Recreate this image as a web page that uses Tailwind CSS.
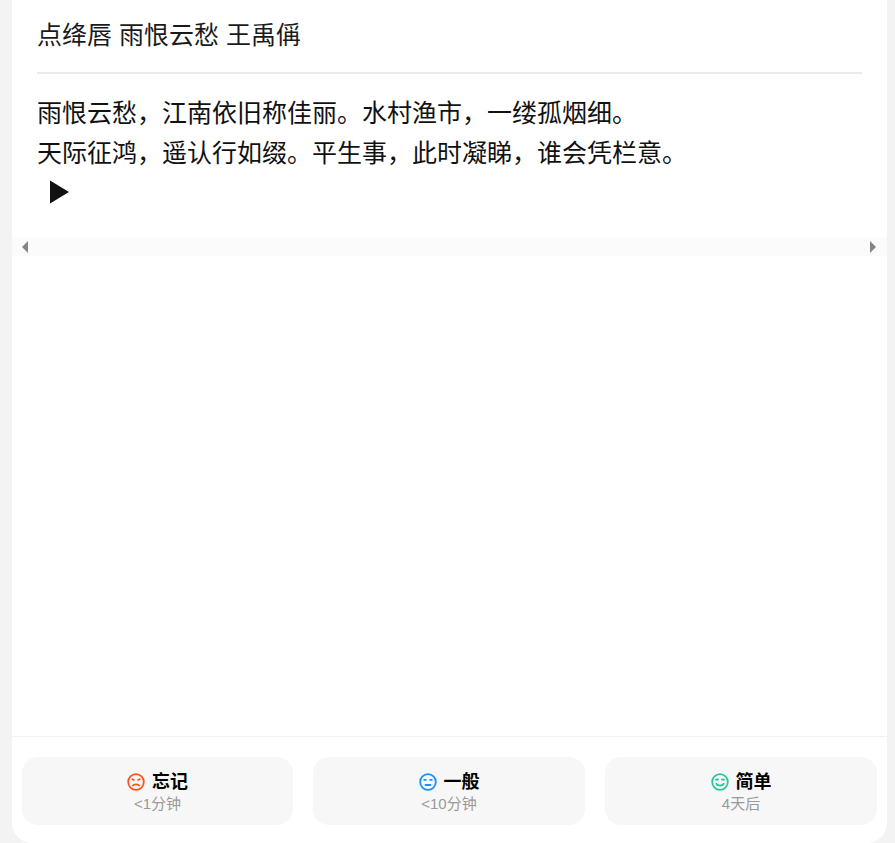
<!DOCTYPE html>
<html lang="zh-CN">
  <head>
    <meta charset="UTF-8" />
    <meta name="viewport" content="width=device-width, initial-scale=1.0" />
    <title>点绛唇</title>
    <script src="https://cdn.jsdelivr.net/npm/@tailwindcss/browser@4"></script>
  </head>
  <body class="bg-[#f3f3f3] font-['Liberation_Sans','Noto_Sans_CJK_SC',sans-serif] h-[843px] overflow-hidden">
    <main class="mx-3 w-[875px] h-[843px] bg-white rounded-b-[20px] flex flex-col">
      <section class="px-[25px] pt-[15px] h-[237px]">
        <h1 class="text-[25px] leading-10 font-normal text-[#1a1a1a] pb-[17px] border-b-2 border-[#ebebeb]">点绛唇 雨恨云愁 王禹偁</h1>
        <div class="mt-[19px] text-[25px] leading-10 text-[#111]">
          <p>雨恨云愁，江南依旧称佳丽。水村渔市，一缕孤烟细。</p>
          <p>天际征鸿，遥认行如缀。平生事，此时凝睇，谁会凭栏意。</p>
          <button class="flex items-center h-[38px] pl-[13px]">
            <svg class="w-[19px] h-6" viewBox="0 0 19 24"><path d="M0 0.5L19 12L0 23.5Z" fill="#111" /></svg>
          </button>
        </div>
      </section>
      <div class="h-[19px] bg-[#fbfbfb] flex items-center justify-between pl-[10px] pr-[11px]">
        <svg class="w-[6px] h-3" viewBox="0 0 6 12"><path d="M6 0V12L0 6Z" fill="#858585" /></svg>
        <svg class="w-[6px] h-3" viewBox="0 0 6 12"><path d="M0 0V12L6 6Z" fill="#858585" /></svg>
      </div>
      <div class="flex-1"></div>
      <footer class="border-t border-[#f2f2f2] h-[107px] px-[10px] pt-5 grid grid-cols-[271px_272px_272px] gap-5">
        <button class="h-[68px] pt-[2px] bg-[#f7f7f7] rounded-2xl flex flex-col items-center justify-center">
          <span class="flex items-center gap-[7px] text-lg leading-[24px] font-bold text-black">
            <svg class="w-[18px] h-[18px]" viewBox="0 0 18 18" fill="none" stroke="#fa541c" stroke-width="1.8"><circle cx="9" cy="9" r="7.8" /><path d="M4.500 6L7.500 7.200M13.500 6L10.500 7.200M5.200 13C7 10.800 11 10.800 12.800 13" /></svg>
            忘记
          </span>
          <span class="text-[15px] leading-[20px] text-[#999]">&lt;1分钟</span>
        </button>
        <button class="h-[68px] pt-[2px] bg-[#f7f7f7] rounded-2xl flex flex-col items-center justify-center">
          <span class="flex items-center gap-[7px] text-lg leading-[24px] font-bold text-black">
            <svg class="w-[18px] h-[18px]" viewBox="0 0 18 18" fill="none" stroke="#1890ff" stroke-width="1.8"><circle cx="9" cy="9" r="7.8" /><path d="M4.500 6.800H7.500M10.500 6.800H13.500M5.800 12H12.200" /></svg>
            一般
          </span>
          <span class="text-[15px] leading-[20px] text-[#999]">&lt;10分钟</span>
        </button>
        <button class="h-[68px] pt-[2px] bg-[#f7f7f7] rounded-2xl flex flex-col items-center justify-center">
          <span class="flex items-center gap-[7px] text-lg leading-[24px] font-bold text-black">
            <svg class="w-[18px] h-[18px]" viewBox="0 0 18 18" fill="none" stroke="#2bc4a0" stroke-width="1.8"><circle cx="9" cy="9" r="7.8" /><path d="M4.500 7.200C5.300 6 6.700 6 7.500 7.200M10.500 7.200C11.300 6 12.700 6 13.500 7.200M4.800 10.300C6.500 13.300 11.500 13.300 13.200 10.300" /></svg>
            简单
          </span>
          <span class="text-[15px] leading-[20px] text-[#999]">4天后</span>
        </button>
      </footer>
    </main>
  </body>
</html>
